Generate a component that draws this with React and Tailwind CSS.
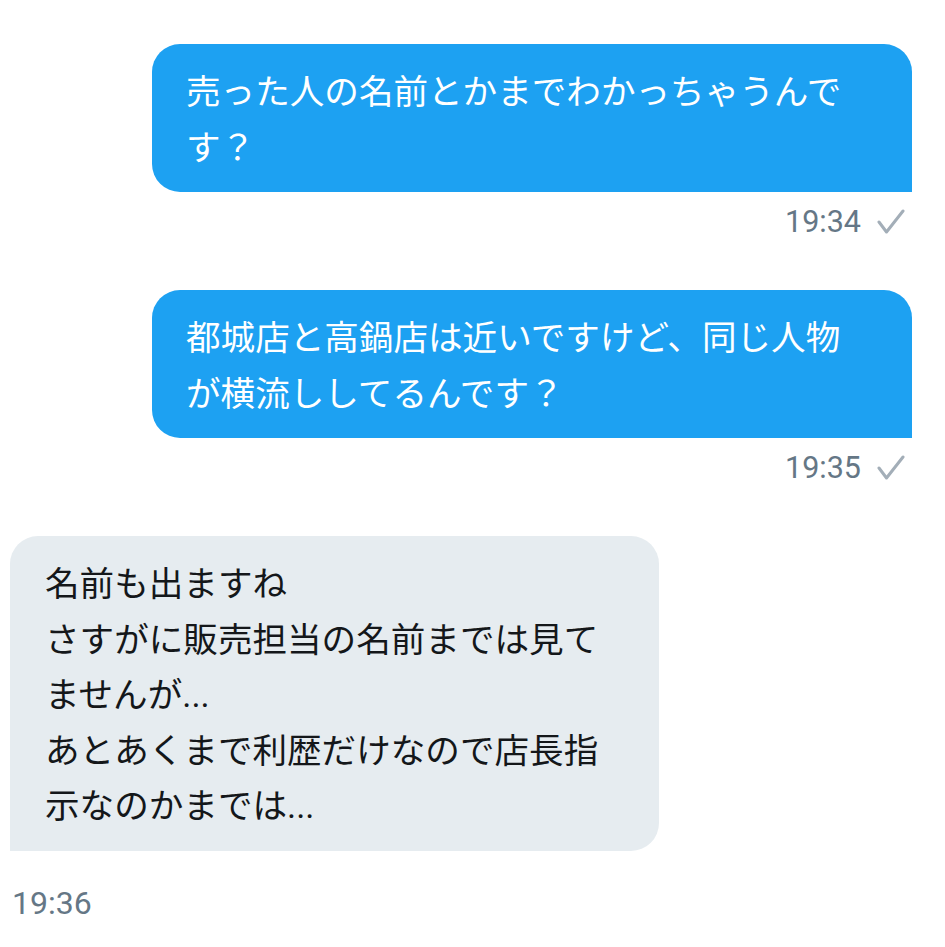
import React from 'react';

const font = { fontFamily: 'Roboto, "Noto Sans CJK JP", sans-serif' };

const messages = [
    { id: 1, mine: true, lines: ['売った人の名前とかまでわかっちゃうんで', 'す？'], time: '19:34' },
    { id: 2, mine: true, lines: ['都城店と高鍋店は近いですけど、同じ人物', 'が横流ししてるんです？'], time: '19:35' },
    {
        id: 3,
        mine: false,
        lines: ['名前も出ますね', 'さすがに販売担当の名前までは見て', 'ませんが...', 'あとあくまで利歴だけなので店長指', '示なのかまでは...'],
        time: '19:36',
    },
];

function Check() {
    return (
        <svg width="28" height="26" viewBox="0 0 28 26" fill="none">
            <path d="M2 13 L9.5 23 L26 2" stroke="#a3aeb8" strokeWidth="3" strokeLinecap="round" strokeLinejoin="round" />
        </svg>
    );
}

function Bubble({ msg }) {
    if (msg.mine) {
        return (
            <div className="flex flex-col items-end pr-[33px]">
                <div className="w-[760px] bg-[#1da1f2] text-white rounded-[28px] rounded-br-none pl-[34px] pr-[20px] pt-[21px] pb-[16px] text-[34.6px] leading-[55.5px]">
                    {msg.lines.map((l, i) => (
                        <div key={i} className="whitespace-nowrap">{l}</div>
                    ))}
                </div>
                <div className="flex items-center gap-[16px] h-[40px] mt-[10px] mb-[48px] pr-[7px]">
                    <span className="text-[30.5px] text-[#657786]">{msg.time}</span>
                    <Check />
                </div>
            </div>
        );
    }
    return (
        <div className="flex flex-col items-start pl-[10px]">
            <div className="w-[649px] bg-[#e6ecf0] text-[#14171a] rounded-[28px] rounded-bl-none pl-[35px] pr-[20px] pt-[21px] pb-[16px] text-[34.6px] leading-[55.5px]">
                {msg.lines.map((l, i) => (
                    <div key={i} className="whitespace-nowrap">{l}</div>
                ))}
            </div>
            <div className="flex items-center h-[40px] mt-[32px] pl-[2px]">
                <span className="text-[32px] text-[#657786]">{msg.time}</span>
            </div>
        </div>
    );
}

export default function App() {
    return (
        <div className="w-[945px] h-[947px] bg-white pt-[44px] overflow-hidden" style={font}>
            {messages.map((m) => (
                <Bubble key={m.id} msg={m} />
            ))}
        </div>
    );
}
